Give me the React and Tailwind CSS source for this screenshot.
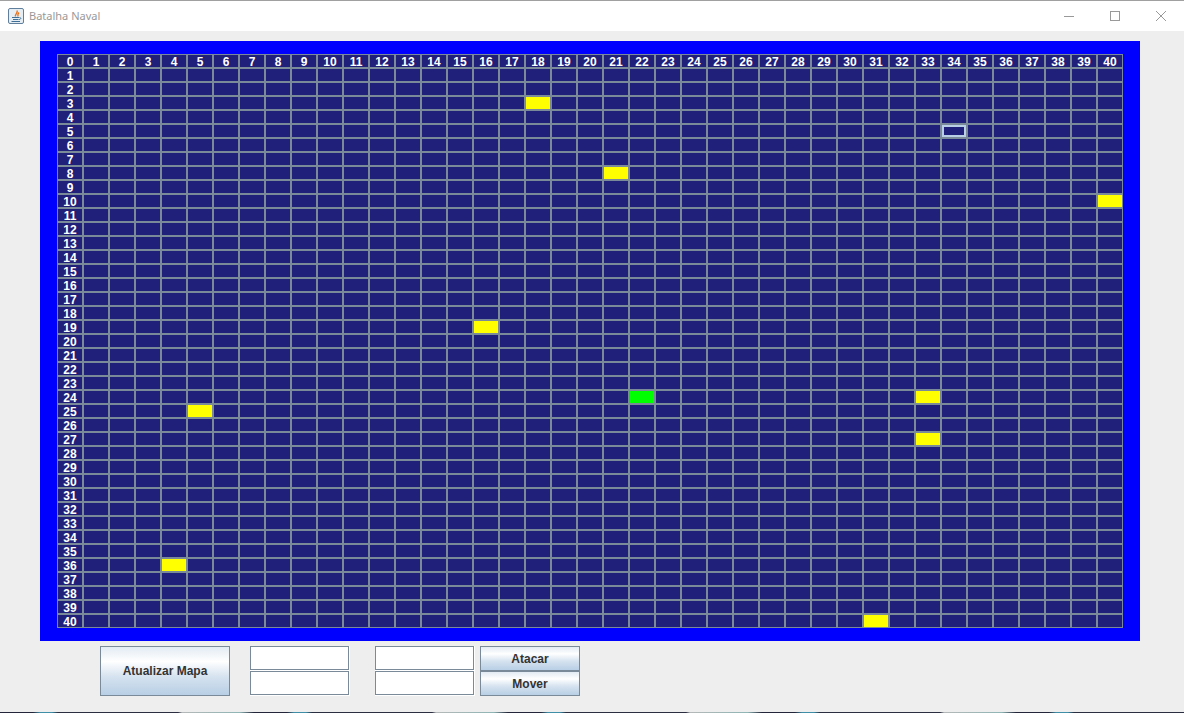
const TAMANHO = 41;

// coluna, linha
const AMARELOS = ["18-3", "21-8", "40-10", "16-19", "33-24", "5-25", "33-27", "4-36", "31-40"];
const VERDES = ["22-24"];
const FOCO = "34-5";

function Celula({ col, lin }) {
  const id = col + "-" + lin;
  const base = "w-[26px] h-[14px] border border-[#7a8a99] flex items-center justify-center";

  if (col === 0 || lin === 0) {
    return (
      <div className={base + " pt-[2px] bg-[#20207a] text-white text-[12px] leading-[14px] font-bold"}>
        {col === 0 ? lin : col}
      </div>
    );
  }
  if (AMARELOS.includes(id)) return <div className={base + " bg-[#ffff00]"} />;
  if (VERDES.includes(id)) return <div className={base + " bg-[#00ff00]"} />;
  if (id === FOCO) return <div className={base + " bg-[#20207a] shadow-[inset_0_0_0_2px_#b8cfe5]"} />;
  return <div className={base + " bg-[#20207a]"} />;
}

function Botao({ children, className }) {
  return (
    <button
      className={
        "border border-[#7a8a99] bg-[linear-gradient(to_bottom,#e3ebf3_0%,#ffffff_30%,#d5e2ef_62%,#b8cfe5_100%)] text-[#333333] text-[12px] font-bold " +
        className
      }
    >
      {children}
    </button>
  );
}

function Campo() {
  return (
    <div className="w-[100px] h-[25px] bg-white pr-px pb-px">
      <input className="w-full h-full bg-white border border-[#7a8a99] outline-none" />
    </div>
  );
}

function IconeJava() {
  return (
    <svg width="16" height="16" viewBox="0 0 16 16">
      <rect x="0.5" y="0.5" width="15" height="15" rx="1.5" fill="#e6edf3" stroke="#5f7f9c" />
      <path d="M9 2.5C10.5 5 6.5 6 7.5 8.5M11 4.5C9.5 6 9.5 7 10 8.5" fill="none" stroke="#e8701a" strokeWidth="1.4" />
      <path d="M4 9.5H11M5 11.5H10.5M3.5 13.5H12" stroke="#3f6f96" strokeWidth="1" />
      <path d="M11.5 9.5C13.5 9.5 13 11.5 11 11.5" fill="none" stroke="#3f6f96" strokeWidth="1" />
    </svg>
  );
}

export default function App() {
  const celulas = [];
  for (let lin = 0; lin < TAMANHO; lin++) {
    for (let col = 0; col < TAMANHO; col++) {
      celulas.push(<Celula key={col + "-" + lin} col={col} lin={lin} />);
    }
  }

  return (
    <div className="w-full h-[713px] bg-[#eeeeee] flex flex-col overflow-hidden font-['Liberation_Sans',sans-serif]">
      <div className="h-[31px] shrink-0 bg-white border-t border-[#a0a0a0] flex items-center">
        <div className="ml-2 mr-[5px] flex items-center">
          <IconeJava />
        </div>
        <span className="flex-1 text-[11px] text-[#999999] font-['Noto_Sans',sans-serif]">Batalha Naval</span>
        <div className="w-[46px] flex justify-center">
          <svg width="10" height="10" viewBox="0 0 10 10">
            <path d="M0 5.5H10" stroke="#999999" />
          </svg>
        </div>
        <div className="w-[46px] flex justify-center">
          <svg width="10" height="10" viewBox="0 0 10 10">
            <rect x="0.5" y="0.5" width="9" height="9" fill="none" stroke="#999999" />
          </svg>
        </div>
        <div className="w-[46px] flex justify-center">
          <svg width="10" height="10" viewBox="0 0 10 10">
            <path d="M0 0L10 10M10 0L0 10" stroke="#999999" />
          </svg>
        </div>
      </div>

      <div className="flex-1 pl-10 pt-[10px]">
        <div className="w-[1100px] h-[600px] bg-[#0000ff] pl-[17px] pt-[13px]">
          <div className="grid grid-cols-[repeat(41,26px)] auto-rows-[14px]">{celulas}</div>
        </div>

        <div className="flex mt-[5px] ml-[60px]">
          <Botao className="w-[130px] h-[50px]">Atualizar Mapa</Botao>
          <div className="flex flex-col ml-5">
            <Campo />
            <Campo />
          </div>
          <div className="flex flex-col ml-[25px]">
            <Campo />
            <Campo />
          </div>
          <div className="flex flex-col ml-[5px]">
            <Botao className="w-[100px] h-[25px]">Atacar</Botao>
            <Botao className="w-[100px] h-[25px]">Mover</Botao>
          </div>
        </div>
      </div>

      {/* pedaco do fundo da area de trabalho que aparece embaixo da janela */}
      <div className="h-px shrink-0 bg-[repeating-linear-gradient(to_right,#23263a_0px,#23263a_33px,#3f8fa8_40px,#3f8fa8_52px,#2b2d40_58px,#2b2d40_178px,#b5b8b8_182px,#8fb5b5_240px,#23263a_254px)]" />
    </div>
  );
}
